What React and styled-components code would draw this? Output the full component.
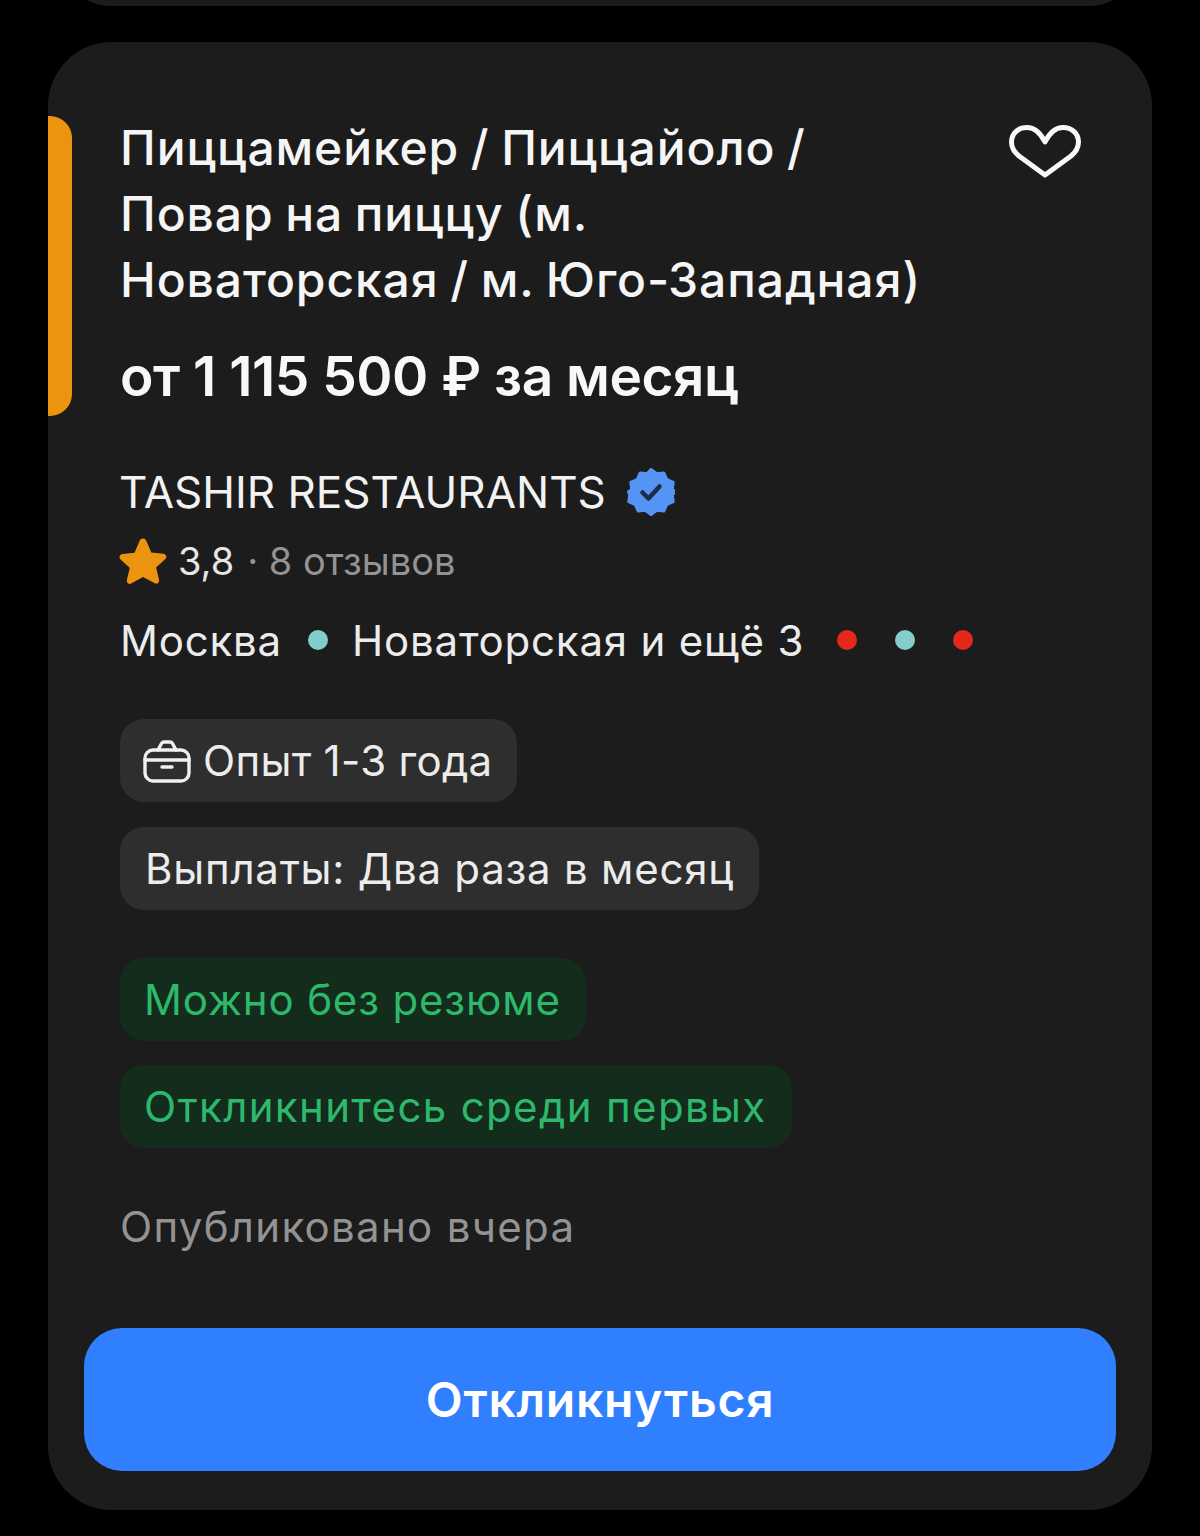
import React from "react";
import styled, { createGlobalStyle } from "styled-components";

const Global = createGlobalStyle`
  html, body { margin: 0; padding: 0; background: #000; }
  body { width: 1200px; height: 1536px; overflow: hidden; font-family: Inter, "Noto Sans", sans-serif; -webkit-font-smoothing: antialiased; }
  * { box-sizing: border-box; }
`;

const Page = styled.div`
  width: 1200px;
  height: 1536px;
  background: #000;
  overflow: hidden;
`;
const PrevCard = styled.div`
  height: 106px;
  margin: -100px 62px 36px;
  background: #1c1c1c;
  border-radius: 0 0 48px 48px;
`;
const Card = styled.article`
  margin: 0 48px;
  height: 1468px;
  background: #1c1c1c;
  border-radius: 64px;
  padding-top: 74px;
  display: flex;
  flex-direction: column;
`;
const Head = styled.header`
  display: flex;
  align-items: stretch;
  height: 300px;
`;
const Accent = styled.div`
  width: 24px;
  margin-right: 48px;
  background: #ec940f;
  border-radius: 0 22px 22px 0;
`;
const HeadText = styled.div`
  width: 887px;
  margin-top: -1px;
`;
const Title = styled.h2`
  margin: 0;
  color: #f5f5f5;
  font-size: 48px;
  line-height: 66px;
  font-weight: 550;
  letter-spacing: 0.9px;
  word-spacing: -2px;
`;
const Salary = styled.div`
  margin-top: 30px;
  color: #f8f8f8;
  font-size: 55px;
  line-height: 66px;
  font-weight: 600;
  letter-spacing: -0.5px;
`;
const Fav = styled.svg`
  width: 76px;
  height: 56px;
  margin-top: 8px;
  flex: none;
`;
const Body = styled.div`
  padding-left: 72px;
  display: flex;
  flex-direction: column;
  align-items: flex-start;
`;
const Company = styled.div`
  margin-top: 50px;
  margin-left: -1px;
  height: 52px;
  display: flex;
  align-items: center;
  gap: 21px;
  color: #f2f2f2;
  font-size: 44px;
`;
const Rating = styled.div`
  margin-top: 21px;
  height: 44px;
  display: flex;
  align-items: center;
  color: #e6e6e6;
  font-size: 38px;
`;
const Muted = styled.span`
  color: #939393;
  margin-left: 13px;
`;
const Metro = styled.div`
  margin-top: 33px;
  height: 48px;
  display: flex;
  align-items: center;
  color: #ececec;
  font-size: 42px;
  letter-spacing: 0.8px;
`;
const Dot = styled.span`
  width: 20px;
  height: 20px;
  flex: none;
  border-radius: 50%;
  background: ${(p) => (p.$red ? "#e5281c" : "#84cdcd")};
  margin: 0 ${(p) => p.$mr ?? 0}px 0 ${(p) => p.$ml ?? 0}px;
`;
const Chip = styled.div`
  height: 83px;
  margin-top: ${(p) => p.$mt}px;
  padding: 0 25px 0 ${(p) => p.$pl ?? 25}px;
  display: inline-flex;
  align-items: center;
  gap: 12px;
  border-radius: 24px;
  background: ${(p) => (p.$green ? "#132c1c" : "#2e2e2e")};
  color: ${(p) => (p.$green ? "#2eb86c" : "#ececec")};
  font-size: 42px;
  letter-spacing: ${(p) => p.$ls ?? 0.76}px;
`;
const Published = styled.div`
  margin-top: 55px;
  height: 48px;
  line-height: 48px;
  color: #939393;
  font-size: 42px;
  letter-spacing: 1.3px;
`;
const Apply = styled.button`
  margin: 77px 36px 0;
  height: 143px;
  border: 0;
  border-radius: 38px;
  background: #2f7fff;
  color: #fff;
  font-family: inherit;
  font-size: 48px;
  font-weight: 600;
  letter-spacing: 0.75px;
`;

const Star = () => (
  <svg width="50" height="47" viewBox="3 1.500 44 43" style={{ marginLeft: -2, marginRight: 10 }}>
    <path d="M25 2c1.600 0 2.600 1 3.300 2.600l4.300 10.200 10.800 1c3 .3 4 3.200 1.800 5.200l-8.200 7.400 2.600 11c.7 3-1.700 4.800-4.200 3.300L25 37.200 14.600 43c-2.600 1.400-5-.3-4.300-3.300l2.600-11L4.700 21.300c-2.200-2-1.200-4.900 1.800-5.200l10.800-1L21.600 4.600C22.300 3 23.400 2 25 2z" fill="#ec940f" />
  </svg>
);

const Verified = () => (
  <svg width="48" height="48" viewBox="0 0 48 48">
    <path d="M24 1.500l5.800 4.300 7-.9 2.900 6.500 6.500 2.900-.9 7 3.200 2.700-3.200 2.700.9 7-6.500 2.900-2.900 6.500-7-.9L24 46.500l-5.800-4.300-7 .9-2.900-6.500-6.500-2.900.9-7L1.500 24l3.200-2.700-.9-7 6.500-2.900 2.900-6.500 7 .9z" fill="#5594f5" stroke="#5594f5" strokeWidth="3" strokeLinejoin="round" />
    <path d="M15.500 24.500l6 6L32.500 18.500" fill="none" stroke="#1b2b48" strokeWidth="4.500" strokeLinecap="round" strokeLinejoin="round" />
  </svg>
);

const Briefcase = () => (
  <svg width="48" height="44" viewBox="0 0 48 44" fill="none" stroke="#f0f0f0" strokeWidth="3.400" strokeLinecap="round" strokeLinejoin="round">
    <path d="M15 11l3.500-6.500c.6-1 1.500-1.500 2.700-1.500h5.600c1.200 0 2.100.5 2.700 1.500L33 11" />
    <rect x="2" y="11" width="44" height="31" rx="8" />
    <path d="M2 21h44" />
    <path d="M19 28h10" />
  </svg>
);

export default function App() {
  return (
    <Page>
      <Global />
      <PrevCard />
      <Card>
        <Head>
          <Accent />
          <HeadText>
            <Title>
              Пиццамейкер / Пиццайоло /<br />
              Повар на пиццу (м.<br />
              Новаторская / м. Юго-Западная)
            </Title>
            <Salary>от 1 115 500 ₽ за месяц</Salary>
          </HeadText>
          <Fav viewBox="0 0 76 56" fill="none">
            <path
              d="M38 51L12 32C7 28 4.500 23 4.500 18 4.500 9.500 11 3.500 20 3.500c8 0 14 6.500 18 14.500 4-8 10-14.500 18-14.500 9 0 15.500 6 15.500 14.500 0 5-2.500 10-7.500 14z"
              stroke="#f8f8f8"
              strokeWidth="5"
              strokeLinejoin="round"
            />
          </Fav>
        </Head>
        <Body>
          <Company>
            TASHIR RESTAURANTS
            <Verified />
          </Company>
          <Rating>
            <Star />
            3,8
            <Muted>· 8 отзывов</Muted>
          </Rating>
          <Metro>
            Москва
            <Dot $ml={26} $mr={24} />
            Новаторская и ещё 3
            <Dot $red $ml={33} />
            <Dot $ml={38} />
            <Dot $red $ml={38} />
          </Metro>
          <Chip $mt={55} $pl={23} $ls={0.3}>
            <Briefcase />
            Опыт 1-3 года
          </Chip>
          <Chip $mt={25}>Выплаты: Два раза в месяц</Chip>
          <Chip $green $mt={48} $ls={0.85} $pl={24}>Можно без резюме</Chip>
          <Chip $green $mt={24} $ls={1.35} $pl={24}>Откликнитесь среди первых</Chip>
          <Published>Опубликовано вчера</Published>
        </Body>
        <Apply>Откликнуться</Apply>
      </Card>
    </Page>
  );
}
